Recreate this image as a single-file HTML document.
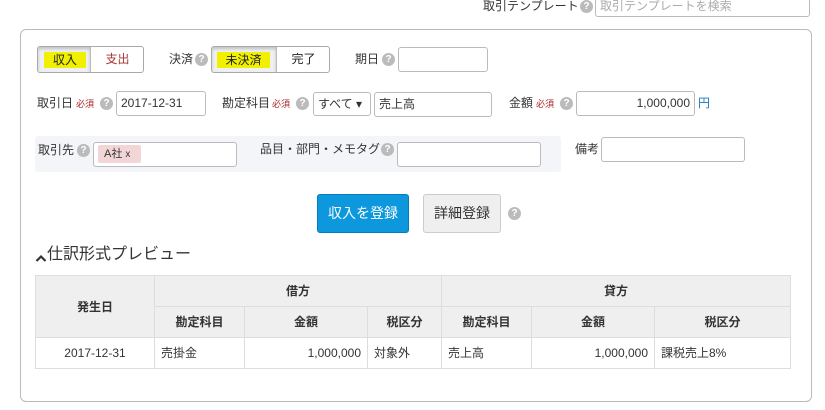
<!DOCTYPE html>
<html><head><meta charset="utf-8"><style>
*{box-sizing:border-box;margin:0;padding:0}
body{width:825px;height:410px;background:#fff;font-family:"Liberation Sans","Noto Sans CJK JP",sans-serif;font-size:12px;color:#333;position:relative;overflow:hidden}
.a{position:absolute;white-space:nowrap}
.in{position:absolute;border:1px solid #bbb;border-radius:3px;background:#fff;height:24px;font-size:12px;line-height:22px;padding:0 4px}
.h{position:absolute;width:13px;height:13px;border-radius:50%;background:#bbb;color:#fff;font-size:10px;font-weight:bold;line-height:13px;text-align:center;font-family:"Liberation Sans",sans-serif}
.req{position:absolute;font-size:9px;line-height:10px;color:#a22;white-space:nowrap}
.lb{position:absolute;font-size:12px;line-height:16px;white-space:nowrap}
table{position:absolute;left:35px;top:275px;width:756px;border-collapse:collapse;font-size:12px}
td,th{border:1px solid #ddd;height:31px;padding:0 6px;line-height:16px}
th{background:#efefef;font-weight:bold;text-align:center}
</style></head><body>
<div class="lb" style="left:483px;top:-2px">取引テンプレート</div>
<div class="h" style="left:580px;top:0px">?</div>
<div class="in" style="left:595px;top:-8px;width:215px;height:25px;color:#aaa;padding-top:6px;line-height:14px">取引テンプレートを検索</div>

<div class="a" style="left:20px;top:29px;width:792px;height:373px;border:1px solid #bbb;border-radius:6px"></div>

<div class="a" style="left:37px;top:46px;width:107px;height:27px;border:1px solid #aaa;border-radius:3px;overflow:hidden">
<div class="a" style="left:0;top:0;width:53px;height:25px;background:#eef0f2;box-shadow:inset 0 2px 3px rgba(0,0,0,.2);border-right:1px solid #bbb"></div>
<div class="a" style="left:6px;top:5px;width:42px;height:16px;background:#f0f000;text-align:center;line-height:16px;color:#222">収入</div>
<div class="a" style="left:53px;top:0;width:53px;line-height:25px;text-align:center;color:#a33">支出</div>
</div>

<div class="lb" style="left:169px;top:51px">決済</div>
<div class="h" style="left:195px;top:53px">?</div>
<div class="a" style="left:211px;top:46px;width:119px;height:27px;border:1px solid #aaa;border-radius:3px;overflow:hidden">
<div class="a" style="left:0;top:0;width:65px;height:25px;background:#eef0f2;box-shadow:inset 0 2px 3px rgba(0,0,0,.2);border-right:1px solid #bbb"></div>
<div class="a" style="left:5px;top:5px;width:53px;height:16px;background:#f0f000;text-align:center;line-height:16px;color:#222">未決済</div>
<div class="a" style="left:65px;top:0;width:53px;line-height:25px;text-align:center;color:#222">完了</div>
</div>
<div class="lb" style="left:355px;top:51px">期日</div>
<div class="h" style="left:382px;top:53px">?</div>
<div class="in" style="left:398px;top:47px;width:90px;height:25px"></div>

<div class="lb" style="left:37px;top:95px">取引日</div>
<div class="req" style="left:76px;top:99px">必須</div>
<div class="h" style="left:100px;top:97px">?</div>
<div class="in" style="left:116px;top:91px;width:90px;height:25px">2017-12-31</div>
<div class="lb" style="left:222px;top:95px">勘定科目</div>
<div class="req" style="left:272px;top:99px">必須</div>
<div class="h" style="left:296px;top:97px">?</div>
<div class="in" style="left:313px;top:92px;width:58px;height:24px">すべて ▾</div>
<div class="in" style="left:374px;top:92px;width:118px;height:25px">売上高</div>
<div class="lb" style="left:509px;top:95px">金額</div>
<div class="req" style="left:536px;top:99px">必須</div>
<div class="h" style="left:560px;top:97px">?</div>
<div class="in" style="left:576px;top:91px;width:119px;height:25px;text-align:right">1,000,000</div>
<div class="lb" style="left:698px;top:95px;color:#1a7ac0">円</div>

<div class="a" style="left:35px;top:136px;width:526px;height:36px;background:#f4f5f8;border-radius:3px"></div>
<div class="lb" style="left:38px;top:142px">取引先</div>
<div class="h" style="left:77px;top:144px">?</div>
<div class="in" style="left:93px;top:142px;width:144px;height:25px"></div>
<div class="a" style="left:98px;top:145px;width:43px;height:18px;background:#f2d6d6;border-radius:2px;font-size:11px;line-height:18px;padding-left:6px">A社 <span style="font-size:10px">x</span></div>
<div class="lb" style="left:260px;top:141px">品目・部門・メモタグ</div>
<div class="h" style="left:381px;top:143px">?</div>
<div class="in" style="left:397px;top:142px;width:144px;height:25px"></div>
<div class="lb" style="left:575px;top:141px">備考</div>
<div class="in" style="left:601px;top:137px;width:144px;height:25px"></div>

<div class="a" style="left:317px;top:194px;width:92px;height:39px;background:#0d98dd;border:1px solid #0a7ab8;border-radius:3px;color:#fff;font-size:14px;line-height:37px;text-align:center">収入を登録</div>
<div class="a" style="left:423px;top:194px;width:78px;height:39px;background:#efefef;border:1px solid #ccc;border-radius:3px;color:#333;font-size:14px;line-height:37px;text-align:center">詳細登録</div>
<div class="h" style="left:508px;top:207px">?</div>

<svg class="a" style="left:35px;top:253px" width="12" height="10"><path d="M1.5 8 L6 3.5 L10.5 8" stroke="#333" stroke-width="2.2" fill="none"/></svg>
<div class="lb" style="left:47px;top:245px;font-size:16px;line-height:20px">仕訳形式プレビュー</div>

<table>
<tr><th rowspan="2" style="width:119px">発生日</th><th colspan="3">借方</th><th colspan="3">貸方</th></tr>
<tr><th style="width:90px">勘定科目</th><th style="width:123px">金額</th><th style="width:74px">税区分</th><th style="width:90px">勘定科目</th><th style="width:123px">金額</th><th>税区分</th></tr>
<tr><td style="text-align:center">2017-12-31</td><td>売掛金</td><td style="text-align:right">1,000,000</td><td>対象外</td><td>売上高</td><td style="text-align:right">1,000,000</td><td>課税売上8%</td></tr>
</table>
</body></html>
